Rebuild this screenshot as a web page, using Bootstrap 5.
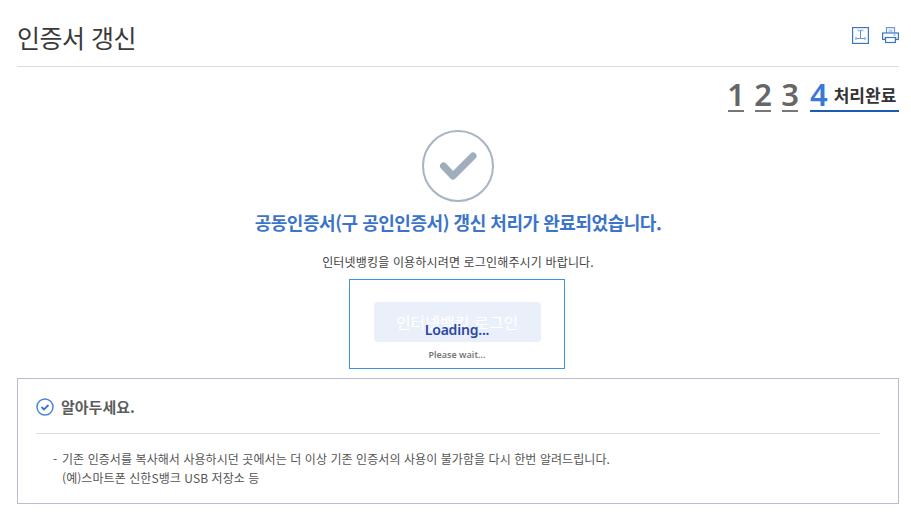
<!DOCTYPE html>
<html lang="ko">
<head>
  <meta charset="UTF-8">
  <meta name="viewport" content="width=device-width, initial-scale=1.0">
  <title>인증서 갱신</title>
  <link href="https://cdn.jsdelivr.net/npm/bootstrap@5.3.3/dist/css/bootstrap.min.css" rel="stylesheet">
  <style>
    body {
      font-family: "Noto Sans CJK KR", "Noto Sans", sans-serif;
      color: #444;
      background: #fff;
      overflow: hidden;
    }

    .page-wrap {
      padding: 0 12px 0 17px;
    }

    .page-head {
      height: 67px;
      border-bottom: 1px solid #ddd;
      padding-top: 15px;
    }

    .page-title {
      font-size: 25px;
      line-height: 44px;
      font-weight: 400;
      color: #3a3a3a;
      margin: 0;
      letter-spacing: -0.5px;
    }

    .head-icons {
      gap: 13px;
      padding-top: 12px;
    }

    .step-row {
      height: 45px;
      margin-top: 10px;
      gap: 11px;
    }

    .step-num {
      font-family: "Noto Sans", sans-serif;
      font-size: 31px;
      line-height: 34px;
      height: 35px;
      width: 16px;
      font-weight: 600;
      color: #666;
      border-bottom: 2px solid #777;
      display: flex;
      justify-content: center;
    }

    .step-cur {
      height: 35px;
      width: 89px;
      margin-left: 1px;
      border-bottom: 2px solid #1d5bb0;
      gap: 6px;
    }

    .step-cur b {
      font-family: "Noto Sans", sans-serif;
      font-size: 31px;
      line-height: 34px;
      font-weight: 600;
      color: #3b78d4;
    }

    .step-cur span {
      font-size: 17px;
      line-height: 36px;
      font-weight: 700;
      color: #333;
      letter-spacing: 0;
      white-space: nowrap;
    }

    .done-icon {
      display: block;
      margin: 8px auto 0;
    }

    .done-msg {
      font-size: 18px;
      line-height: 24px;
      font-weight: 700;
      color: #3b74c9;
      margin: 8px 0 0;
      letter-spacing: -0.46px;
    }

    .done-sub {
      font-size: 12px;
      line-height: 18px;
      color: #444;
      margin: 19px 0 0;
      letter-spacing: 0.16px;
    }

    .login-frame {
      width: 216px;
      height: 90px;
      margin: 8px auto 0;
      border: 1px solid #3f94de;
      position: relative;
      left: -1px;
    }

    .btn-login {
      display: block;
      width: 167px;
      height: 40px;
      margin: 22px auto 0;
      padding: 0;
      border: 0;
      border-radius: 4px;
      background: #e9f0fa;
      color: #fff;
      font-size: 16px;
      line-height: 40px;
    }

    .loading-box {
      position: absolute;
      left: 0;
      right: 0;
      top: 39px;
      text-align: center;
      font-family: "Noto Sans", sans-serif;
    }

    .loading-box strong {
      display: block;
      font-size: 14px;
      line-height: 22px;
      font-weight: 600;
      color: #2c47a8;
      letter-spacing: -0.2px;
    }

    .loading-box small {
      display: block;
      font-size: 9px;
      line-height: 14px;
      font-weight: 600;
      color: #777;
      margin-top: 7px;
    }

    .notice-box {
      height: 126px;
      margin-top: 9px;
      border: 1px solid #b9bccf;
      padding: 0 18px;
    }

    .notice-head {
      height: 55px;
      border-bottom: 1px solid #ddd;
      gap: 7px;
      padding-top: 1px;
    }

    .notice-head h2 {
      font-size: 15px;
      line-height: 20px;
      font-weight: 700;
      color: #5c5c5c;
      margin: 0;
    }

    .notice-list {
      list-style: none;
      padding: 15px 0 0 17px;
      margin: 0;
      font-size: 12px;
      line-height: 19px;
      color: #555;
      position: relative;
      letter-spacing: 0.07px;
    }

    .notice-list li::before {
      content: "-";
      position: absolute;
      left: 17px;
    }

    .notice-list li {
      padding-left: 9px;
    }
  </style>
</head>
<body>
  <div class="page-wrap">
    <div class="page-head d-flex justify-content-between">
      <h1 class="page-title">인증서 갱신</h1>
      <div class="head-icons d-flex align-items-start">
        <svg width="17" height="17" viewBox="0 0 17 17" fill="none">
          <rect x="0.6" y="0.6" width="15.800" height="15.800" stroke="#3b78c4" stroke-width="1.200"/>
          <path d="M5.500 3.500h6" stroke="#9dbbe4" stroke-width="1.500"/>
          <path d="M8.500 3.500v8" stroke="#5f8fd0" stroke-width="1"/>
          <path d="M3.500 11.500h10" stroke="#6f9ad6" stroke-width="1"/>
          <path d="M4 10v3M13 10v3" stroke="#9dbbe4" stroke-width="1.500"/>
        </svg>
        <svg width="17" height="17" viewBox="0 0 17 17" fill="none">
          <path d="M4.500 6V0.600h8V6" stroke="#6f9ad6" stroke-width="1.200"/>
          <rect x="6.500" y="2.500" width="4" height="3" fill="#bcd0ee"/>
          <rect x="0.600" y="6" width="15.800" height="6.500" stroke="#3b78c4" stroke-width="1.200"/>
          <rect x="1.200" y="10" width="14.600" height="2" fill="#bcd0ee"/>
          <rect x="3.600" y="10.500" width="9.800" height="5" fill="#fff" stroke="#3b78c4" stroke-width="1.200"/>
          <path d="M11.500 8h2" stroke="#6f9ad6" stroke-width="1.200"/>
        </svg>
      </div>
    </div>

    <div class="step-row d-flex justify-content-end">
      <div class="step-num">1</div>
      <div class="step-num">2</div>
      <div class="step-num">3</div>
      <div class="step-cur d-flex"><b>4</b><span>처리완료</span></div>
    </div>

    <svg class="done-icon" width="72" height="72" viewBox="0 0 72 72" fill="none">
      <circle cx="36" cy="36" r="35" stroke="#a7b4c3" stroke-width="2"/>
      <path d="M21.500 36L31 46L51 26" stroke="#9fadbd" stroke-width="7" stroke-linejoin="round" stroke-linecap="round"/>
    </svg>

    <p class="done-msg text-center">공동인증서(구 공인인증서) 갱신 처리가 완료되었습니다.</p>
    <p class="done-sub text-center">인터넷뱅킹을 이용하시려면 로그인해주시기 바랍니다.</p>

    <div class="login-frame">
      <button type="button" class="btn-login">인터넷뱅킹 로그인</button>
      <div class="loading-box">
        <strong>Loading...</strong>
        <small>Please wait...</small>
      </div>
    </div>

    <div class="notice-box">
      <div class="notice-head d-flex align-items-center">
        <svg width="18" height="18" viewBox="0 0 18 18" fill="none">
          <circle cx="9" cy="9" r="8" stroke="#4a86d8" stroke-width="1.500"/>
          <path d="M5.500 9l2.500 2.500L12.500 7" stroke="#3f74c4" stroke-width="1.800"/>
        </svg>
        <h2>알아두세요.</h2>
      </div>
      <ul class="notice-list">
        <li>기존 인증서를 복사해서 사용하시던 곳에서는 더 이상 기존 인증서의 사용이 불가함을 다시 한번 알려드립니다.<br>(예)스마트폰 신한S뱅크 USB 저장소 등</li>
      </ul>
    </div>
  </div>
</body>
</html>
